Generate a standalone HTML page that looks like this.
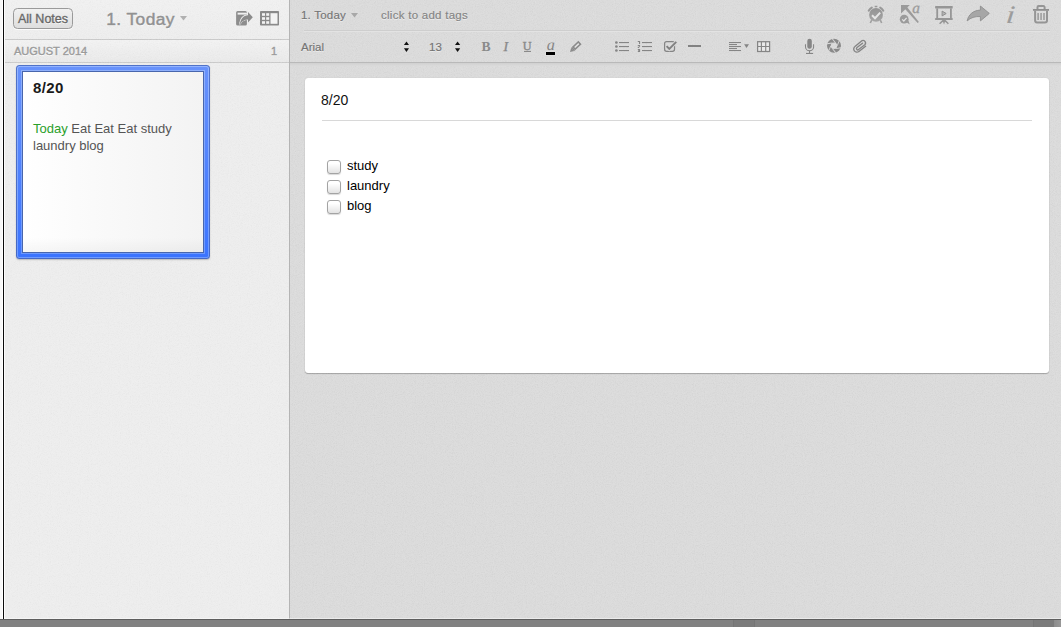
<!DOCTYPE html>
<html>
<head>
<meta charset="utf-8">
<title>Evernote</title>
<style>
html,body{margin:0;padding:0;}
body{width:1061px;height:627px;overflow:hidden;position:relative;background:#fff;font-family:"Liberation Sans",sans-serif;}
.abs{position:absolute;}
#leftline{left:3px;top:0;width:1px;height:620px;background:#0a0a0a;}
#leftline2{left:4px;top:0;width:1px;height:619px;background:#fbfbfb;}
#leftpad{left:0;top:0;width:2px;height:619px;background:#f7f7f7;}
#sidebar{left:4px;top:0;width:285px;height:619px;background:#ededed;}
#sbhead{left:0;top:0;width:285px;height:39px;background:linear-gradient(#f0f0f0,#ededed);}
#sbline1{left:0;top:39px;width:285px;height:1px;background:#c9c9c9;}
#sbsec{left:0;top:40px;width:285px;height:22px;background:linear-gradient(#f2f2f2,#e9e9e9);}
#sbline2{left:0;top:62px;width:285px;height:1px;background:#cbcbcb;}
#divider{left:289px;top:0;width:1px;height:619px;background:#b4b4b4;}
#main{left:290px;top:0;width:771px;height:619px;background:#dbdbdb;}
#bottomline{left:0;top:619px;width:1061px;height:1px;background:#5e5e5e;}
#bottom{left:0;top:620px;width:1061px;height:7px;background:#818181;}
#bp1{left:733px;top:620px;width:22px;height:7px;background:#7b7b7b;box-shadow:inset 1px 0 0 #757575,inset -1px 0 0 #757575;}
#bp2{left:1033px;top:620px;width:21px;height:7px;background:#7b7b7b;box-shadow:inset 1px 0 0 #757575;}
#bp3{left:1054px;top:620px;width:7px;height:7px;background:linear-gradient(90deg,#8c8c8c,#989898);}
#hl618{left:4px;top:618px;width:1057px;height:1px;background:rgba(255,255,255,.45);}
#allnotes{left:9px;top:8px;width:58px;height:19px;border:1px solid #9a9a9a;border-radius:4.5px;background:linear-gradient(#f1f1f1,#dedede);box-shadow:0 1px 0 rgba(255,255,255,.8);}
#allnotes span{position:absolute;left:4px;top:3px;font-size:12.5px;line-height:15px;color:#676767;-webkit-text-stroke:.35px #676767;text-shadow:0 1px 0 #fff;white-space:nowrap;}
#nbtitle{left:102.3px;top:8.9px;font-size:17.4px;letter-spacing:.4px;line-height:20px;color:#919191;-webkit-text-stroke:.45px #919191;text-shadow:0 1px 0 #fff;white-space:nowrap;}
#sec1{left:10px;top:45px;font-size:11px;line-height:12px;color:#9b9b9b;-webkit-text-stroke:.4px #9b9b9b;text-shadow:0 1px 0 #fff;white-space:nowrap;}
#sec2{left:267px;top:45px;font-size:11px;line-height:12px;color:#9b9b9b;-webkit-text-stroke:.4px #9b9b9b;text-shadow:0 1px 0 #fff;}
#cardwrap{left:12px;top:65px;width:194px;height:194px;border-radius:3.5px;background:linear-gradient(#5072c8,#4669c4);box-shadow:0 1px 1.5px rgba(0,0,0,.22);}
#cardwrap .l1{left:1px;top:1px;right:1px;bottom:1px;border-radius:2.5px;background:linear-gradient(#93b4ff,#6e9bff);}
#cardwrap .l2{left:2px;top:2px;right:2px;bottom:2px;border-radius:1.5px;background:linear-gradient(#6892fb,#3b74ff);}
#cardwrap .l3{left:5px;top:5px;right:5px;bottom:5px;background:linear-gradient(#8fb0fb,#6c98fd);}
#cardin{left:6px;top:6px;width:180px;height:180px;border:1px solid #4866ad;background:linear-gradient(rgba(0,0,0,0) 92%,rgba(0,0,0,.035)),linear-gradient(90deg,#ffffff 0%,#fbfbfb 30%,#f3f3f3 100%);}
#ctitle{left:10px;top:7.1px;letter-spacing:.35px;font-size:15px;font-weight:bold;line-height:17px;color:#1a1a1a;}
#cbody{left:10px;top:47.5px;width:165px;font-size:13px;line-height:17px;color:#555;}
#cbody b{font-weight:normal;color:#2aa02a;}
/* toolbar */
#tbline1{left:14px;top:31px;width:746px;height:1px;background:#e3e3e3;}
#tbline1b{left:14px;top:30px;width:746px;height:1px;background:#cecece;}
#tbbottom{left:0;top:62px;width:771px;height:1px;background:#b9b9b9;}
#tbbottom2{left:0;top:63px;width:771px;height:3px;background:linear-gradient(#d0d0d0,#dbdbdb);}
.tbt{font-size:11.5px;line-height:13px;color:#747474;-webkit-text-stroke:.15px #747474;white-space:nowrap;text-shadow:0 1px 0 rgba(255,255,255,.5);}
#note{left:15px;top:78px;width:744px;height:295px;background:#fff;border-radius:3px;box-shadow:0 1px 1px rgba(0,0,0,.24),0 0 1px rgba(0,0,0,.18);}
#ntitle{left:16px;top:14px;font-size:14px;line-height:16px;color:#111;}
#nline{left:17px;top:42px;width:710px;height:1px;background:#d8d8d8;}
.cb{width:12px;height:12px;border:1px solid #a3a3a3;border-radius:3px;background:linear-gradient(#ffffff 20%,#e3e3e3);box-shadow:0 1px 1px rgba(0,0,0,.15);}
.ct{font-size:13px;line-height:15px;color:#000;}
</style>
</head>
<body>
<div class="abs" id="leftline"></div>
<div class="abs" id="sidebar">
  <div class="abs" id="sbhead"></div>
  <div class="abs" id="sbline1"></div>
  <div class="abs" id="sbsec"></div>
  <div class="abs" id="sbline2"></div>
<svg class="abs" style="left:1px;top:0" width="284" height="619"><defs><filter id="nz" x="0" y="0" width="100%" height="100%"><feTurbulence type="fractalNoise" baseFrequency="0.9" numOctaves="2" seed="7"/><feColorMatrix type="matrix" values="0 0 0 0 1  0 0 0 0 1  0 0 0 0 1  0.9 0.9 0 0 -0.78"/></filter><filter id="nz2" x="0" y="0" width="100%" height="100%"><feTurbulence type="fractalNoise" baseFrequency="0.9" numOctaves="2" seed="11"/><feColorMatrix type="matrix" values="0 0 0 0 0  0 0 0 0 0  0 0 0 0 0  0.9 0.9 0 0 -0.8"/></filter></defs><rect width="284" height="619" filter="url(#nz)" opacity=".25"/><rect width="284" height="619" filter="url(#nz2)" opacity=".04"/></svg>
  <div class="abs" id="allnotes"><span>All Notes</span></div>
  <div class="abs" id="nbtitle">1. Today</div>
  <svg class="abs" style="left:176px;top:16px" width="8" height="5" viewBox="0 0 8 5"><path d="M0 0H7L3.5 4.6Z" fill="#b0b0b0"/></svg>
  <div class="abs" id="sec1">AUGUST 2014</div>
  <div class="abs" id="sec2">1</div>
  <div class="abs" id="cardwrap"><div class="abs l1"></div><div class="abs l2"></div><div class="abs l3"></div>
    <div class="abs" id="cardin">
      <div class="abs" id="ctitle">8/20</div>
      <div class="abs" id="cbody"><b>Today</b> Eat Eat Eat study laundry blog</div>
    </div>
  </div>
</div>
<div class="abs" id="divider"></div><div class="abs" id="leftline2"></div><div class="abs" id="leftpad"></div>
<div class="abs" id="main">
<svg class="abs" style="left:0;top:0" width="771" height="619"><rect width="771" height="619" filter="url(#nz)" opacity=".2"/><rect width="771" height="619" filter="url(#nz2)" opacity=".05"/></svg>
  <div class="abs" id="tbline1b"></div>
  <div class="abs" id="tbline1"></div>
  <div class="abs" id="tbbottom"></div>
  <div class="abs" id="tbbottom2"></div>
  <div class="abs tbt" style="left:11px;top:8.5px;letter-spacing:.22px">1. Today</div>
  <svg class="abs" style="left:61px;top:13px" width="8" height="5" viewBox="0 0 8 5"><path d="M0 0H7L3.5 4.6Z" fill="#a8a8a8"/></svg>
  <div class="abs tbt" style="left:91px;top:8.5px;letter-spacing:.27px;color:#848484;-webkit-text-stroke:.15px #848484">click to add tags</div>
  <div class="abs tbt" style="left:11px;top:41px">Arial</div>
  <div class="abs tbt" style="left:139px;top:41px">13</div>
  <div class="abs" id="note">
    <div class="abs" id="ntitle">8/20</div>
    <div class="abs" id="nline"></div>
    <div class="abs cb" style="left:22px;top:82px"></div>
    <div class="abs cb" style="left:22px;top:102px"></div>
    <div class="abs cb" style="left:22px;top:122px"></div>
    <div class="abs ct" style="left:42px;top:80px">study</div>
    <div class="abs ct" style="left:42px;top:100px">laundry</div>
    <div class="abs ct" style="left:42px;top:120px">blog</div>
  </div>
</div>

<svg class="abs" id="icons" style="left:0;top:0" width="1061" height="627" viewBox="0 0 1061 627">
<!-- sidebar: export icon -->
<g id="ic-export">
  <rect x="236.1" y="10.9" width="10.8" height="14.7" rx="1.5" fill="#8d8d8d"/>
  <rect x="237.6" y="12.7" width="9.3" height="1.9" fill="#f1f1f1"/>
  <path d="M247.6 14.4 C242.6 14.6 239.6 18.6 239.4 24 C241.4 20.6 244 19 247.6 19 Z" fill="#efefef"/>
  <path d="M248 12.1 L252.8 17.3 L248 22.4 V19.5 C244.6 19.4 242.2 20.9 240 24.4 C240.4 19.2 243.4 15.5 248 15.3 Z" fill="#8b8b8b" stroke="#ededed" stroke-width="1" paint-order="stroke"/>
</g>
<!-- sidebar: layout icon -->
<g id="ic-layout">
  <rect x="260" y="10.9" width="19" height="14.7" rx="0.8" fill="#8a8a8a"/>
  <g fill="#f3f3f3">
    <rect x="262" y="13.2" width="3" height="2.6"/><rect x="266.2" y="13.2" width="3" height="2.6"/>
    <rect x="262" y="17.2" width="3" height="2.6"/><rect x="266.2" y="17.2" width="3" height="2.6"/>
    <rect x="262" y="21.2" width="3" height="2.6"/><rect x="266.2" y="21.2" width="3" height="2.6"/>
    <rect x="270.5" y="13.2" width="7" height="10.6"/>
  </g>
</g>
<!-- steppers -->
<g fill="#111">
  <path d="M403.9 45 L409 45 L406.45 41.4 Z"/><path d="M403.9 48.2 L409 48.2 L406.45 51.9 Z"/>
  <path d="M455 45 L460.2 45 L457.6 41.4 Z"/><path d="M455 48.2 L460.2 48.2 L457.6 51.9 Z"/>
</g>
<!-- B I U a -->
<g fill="#8a8a8a" font-family="Liberation Serif, serif" text-rendering="geometricPrecision">
  <text x="481.5" y="51" font-size="13.7" font-weight="bold">B</text>
  <text x="503.6" y="51" font-size="13.6" font-style="italic" stroke="#8a8a8a" stroke-width=".35">I</text>
  <text x="522.8" y="50" font-size="12.2" stroke="#8a8a8a" stroke-width=".4">U</text>
  <rect x="524" y="50.9" width="7" height="1.1"/>
  <text x="546.8" y="49.8" font-size="16.2" font-style="italic" fill="#858585">a</text>
</g>
<rect x="545.5" y="51.5" width="10" height="4" fill="#e5e5e5"/>
<rect x="546" y="52" width="9" height="3" fill="#000"/>
<!-- highlighter -->
<g transform="translate(570 51.9) rotate(-43.4)" fill="#8c8c8c">
  <path d="M0 0 L3.6 -2.1 L3.6 2.1 Z"/>
  <rect x="3.4" y="-2.2" width="1.5" height="4.4"/>
  <rect x="5.6" y="-1.55" width="7.3" height="3.1" fill="#e2e2e2" stroke="#8a8a8a" stroke-width="1.6"/>
</g>
<!-- bullet list -->
<g fill="#858585">
  <rect x="619" y="42" width="10" height="1.1"/><rect x="619" y="46" width="10" height="1.1"/><rect x="619" y="50" width="10" height="1.1"/>
  <circle cx="616.4" cy="42.5" r="1.35"/><circle cx="616.4" cy="46.5" r="1.35"/><circle cx="616.4" cy="50.5" r="1.35"/>
  <!-- numbered list -->
  <rect x="642" y="42" width="10" height="1.1"/><rect x="642" y="46" width="10" height="1.1"/><rect x="642" y="50" width="10" height="1.1"/>
  <path d="M637.8 41 H640.1 V43.9 H639 V42 H637.8 Z"/>
  <path d="M637.8 44.9 H640.1 V46.7 H639.2 V47.9 H637.8 V46.7 H639 V46 H637.8 Z"/>
  <path d="M637.8 49 H640.1 V52 H637.8 V51.1 H639 V50.9 H638.3 V50.1 H639 V49.9 H637.8 Z"/>
</g>
<!-- checkbox icon -->
<rect x="664.6" y="41.6" width="9.9" height="9.7" rx="2" fill="none" stroke="#858585" stroke-width="1.25"/>
<path d="M666.6 46.1 L669.3 49 L676.3 41.9" fill="none" stroke="#dbdbdb" stroke-width="3.4"/>
<path d="M666.6 46.1 L669.3 49 L676.3 41.9" fill="none" stroke="#808080" stroke-width="1.9"/>
<!-- hr -->
<rect x="688" y="45" width="13" height="2" fill="#828282"/>
<!-- align -->
<g fill="#858585">
  <rect x="729" y="42" width="12" height="1.05"/><rect x="729" y="44" width="8" height="1.05"/><rect x="729" y="46" width="12" height="1.05"/><rect x="729" y="48" width="8" height="1.05"/><rect x="729" y="50" width="12" height="1.05"/>
  <path d="M744.1 44.3 H749 L746.55 48.1 Z"/>
</g>
<!-- table -->
<rect x="757.6" y="41.7" width="12" height="9.8" fill="#e9e9e9" stroke="#858585" stroke-width="1.25"/>
<path d="M761.4 41.7 V51.5 M765.7 41.7 V51.5 M757.6 46.5 H769.6" stroke="#858585" stroke-width="1.15" fill="none"/>
<!-- mic -->
<g>
  <rect x="807.3" y="38.8" width="4.5" height="10" rx="2.25" fill="#858585"/>
  <path d="M805.5 44.3 V46.8 A4.05 4.05 0 0 0 813.6 46.8 V44.3" fill="none" stroke="#858585" stroke-width="1.05"/>
  <rect x="809" y="50.8" width="1.1" height="2.6" fill="#858585"/>
  <rect x="806" y="52.9" width="7.1" height="1.1" fill="#858585"/>
</g>
<!-- aperture -->
<g transform="translate(834 45.8)">
  <circle r="5.1" fill="none" stroke="#8a8a8a" stroke-width="3.8"/>
  <g stroke="#dbdbdb" stroke-width="0.9">
    <path d="M3.2 0 L5.2 -5" /><path d="M3.2 0 L5.2 -5" transform="rotate(60)"/><path d="M3.2 0 L5.2 -5" transform="rotate(120)"/>
    <path d="M3.2 0 L5.2 -5" transform="rotate(180)"/><path d="M3.2 0 L5.2 -5" transform="rotate(240)"/><path d="M3.2 0 L5.2 -5" transform="rotate(300)"/>
  </g>
</g>
<!-- paperclip -->
<path d="M865.6 46.3 L858.9 51.5 A3.2 3.2 0 0 1 854.95 46.45 L861.6 40.9 A2.5 2.5 0 0 1 864.8 44.7 L858.6 49.57 A1.3 1.3 0 0 1 857 47.5 L862.5 43.2" fill="none" stroke="#848484" stroke-width="1.35" stroke-linecap="round" stroke-linejoin="round"/>
<!-- alarm clock -->
<defs><linearGradient id="gclk" x1="0" y1="0" x2="0" y2="1"><stop offset="0" stop-color="#939393"/><stop offset="1" stop-color="#a6a6a6"/></linearGradient></defs>
<g>
  <circle cx="876" cy="14.9" r="6.9" fill="url(#gclk)"/>
  <path d="M868.7 10.7 A8.4 8.4 0 0 1 871.8 7.6" fill="none" stroke="#999" stroke-width="2.1" stroke-linecap="round"/>
  <path d="M883.3 10.7 A8.4 8.4 0 0 0 880.2 7.6" fill="none" stroke="#999" stroke-width="2.1" stroke-linecap="round"/>
  <rect x="874.6" y="5.7" width="2.8" height="1.5" rx="0.5" fill="#999"/>
  <path d="M871.7 20.2 L870.3 23 M880.3 20.2 L881.7 23" stroke="#a0a0a0" stroke-width="1.6" fill="none"/>
  <path d="M872 15.3 L875 18.2 L880.2 12.6" fill="none" stroke="#e6e6e6" stroke-width="2"/>
</g>
<!-- annotate -->
<g fill="#9b9b9b">
  <path d="M901 5 H909.8 L901 13.5 Z"/>
  <path d="M904.2 8 L906.4 6.2 L918.9 22 L917.6 23.1 Z"/>
  <text x="912.3" y="12.7" font-family="Liberation Serif, serif" font-style="italic" font-size="15.4" stroke="#9b9b9b" stroke-width=".3" text-rendering="geometricPrecision">a</text>
  <circle cx="904.2" cy="19.2" r="4.4"/>
  <path d="M906 22 L909.8 24.6 L908.4 20.4 Z"/>
  <path d="M902.2 19.4 L903.8 21 L906.6 17.8" fill="none" stroke="#e2e2e2" stroke-width="1.2"/>
</g>
<!-- presentation -->
<g fill="#969696">
  <rect x="935.1" y="6" width="17.6" height="2.6" rx="0.5"/>
  <rect x="936.3" y="8.4" width="1.8" height="10"/>
  <rect x="950" y="8.4" width="1.8" height="10"/>
  <rect x="935.1" y="18" width="17.6" height="1.9" rx="0.5"/>
  <path d="M944 19.6 L939.6 23.8 M944 19.6 V23.6 M944 19.6 L948.4 23.8" stroke="#969696" stroke-width="1.5" fill="none"/>
  <path d="M942.1 11.1 L946.2 13.5 L942.1 15.9 Z" fill="#b4b4b4" stroke="#8f8f8f" stroke-width="1"/>
</g>
<!-- share -->
<path d="M980.4 6 L989.3 13.4 L980.4 20.9 V16.5 C975 16.3 970.6 17.6 967.2 20.9 C968.4 14.5 973.4 10.3 980.4 10.1 Z" fill="#a6a6a6" stroke="#8f8f8f" stroke-width="0.9"/>
<!-- info -->
<text transform="translate(1005.6 22.7) scale(1.18 .97) skewX(-5)" font-family="Liberation Serif, serif" font-style="italic" font-size="26" fill="#9c9c9c" stroke="#9c9c9c" stroke-width="0.15" text-rendering="geometricPrecision">i</text>
<!-- trash -->
<g>
  <path d="M1037.5 9.6 V7.3 A1.2 1.2 0 0 1 1038.7 6.1 H1043.4 A1.2 1.2 0 0 1 1044.6 7.3 V9.6" fill="none" stroke="#959595" stroke-width="2"/>
  <rect x="1033" y="9" width="16" height="1.8" fill="#8f8f8f"/>
  <path d="M1035.1 10.8 V20.6 A2 2 0 0 0 1037.1 22.6 H1045 A2 2 0 0 0 1047 20.6 V10.8" fill="none" stroke="#959595" stroke-width="2"/>
  <rect x="1037.4" y="13" width="1.4" height="7" fill="#959595"/>
  <rect x="1040.35" y="13" width="1.4" height="7" fill="#959595"/>
  <rect x="1043.3" y="13" width="1.4" height="7" fill="#959595"/>
</g>
</svg>
<div class="abs" id="bottomline"></div>
<div class="abs" id="bottom"></div><div class="abs" id="bp1"></div><div class="abs" id="bp2"></div><div class="abs" id="bp3"></div><div class="abs" id="hl618"></div>
</body>
</html>
